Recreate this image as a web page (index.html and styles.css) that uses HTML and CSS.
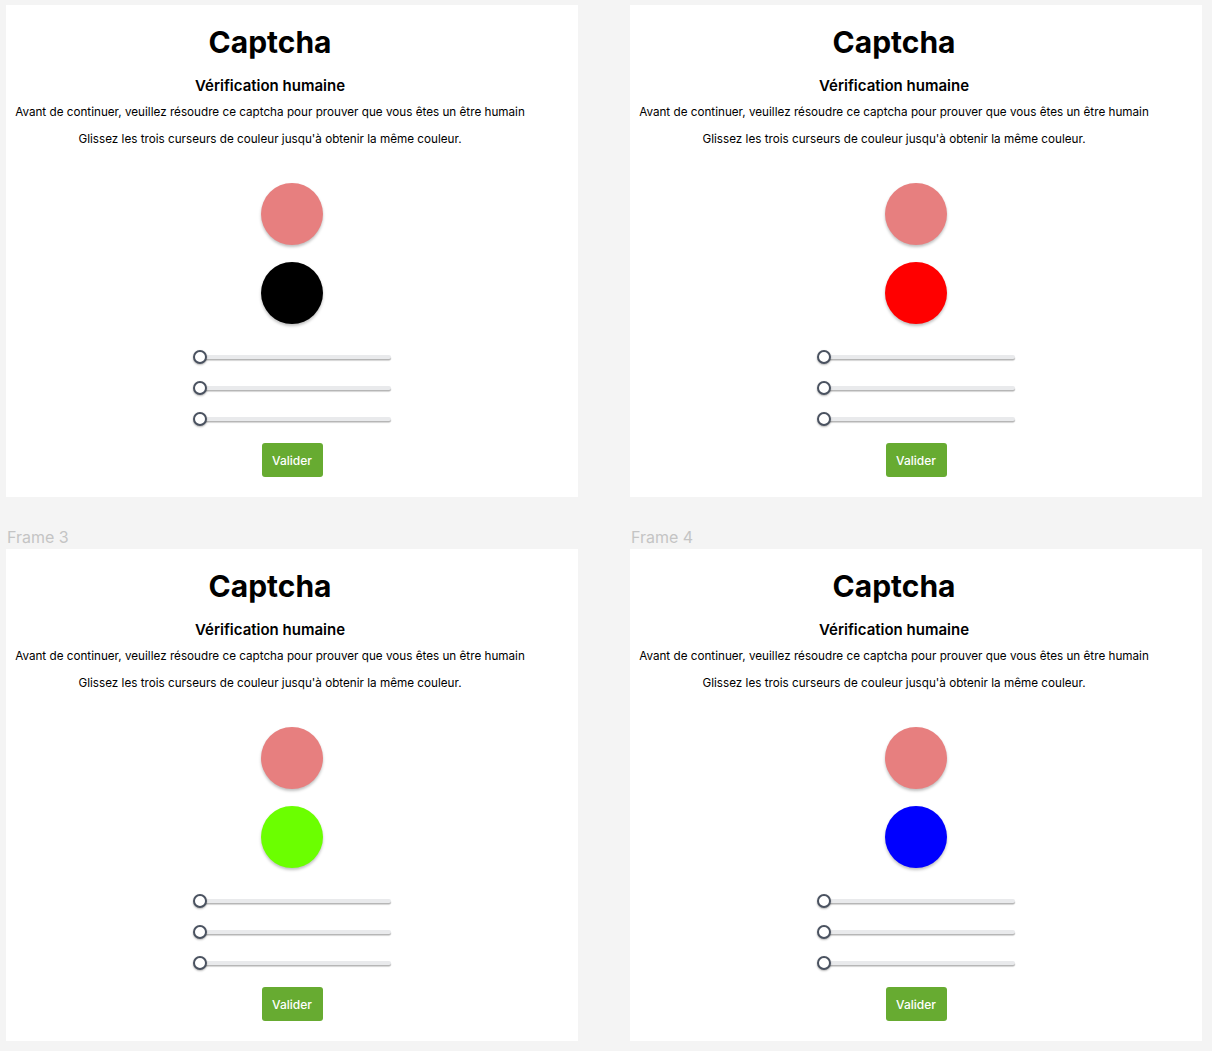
FILE: index.html
```html
<!DOCTYPE html>
<html lang="fr">
<head>
<meta charset="utf-8">
<title>Captcha</title>
<link rel="stylesheet" href="styles.css">
</head>
<body>
<div class="board">
  <div class="cell">
    <div class="frame">
      <div class="head">
        <h1 class="title">Captcha</h1>
        <h2 class="subtitle">Vérification humaine</h2>
        <p class="text">Avant de continuer, veuillez résoudre ce captcha pour prouver que vous êtes un être humain</p>
        <p class="text text-2">Glissez les trois curseurs de couleur jusqu'à obtenir la même couleur.</p>
      </div>
      <div class="body">
        <div class="dot dot-target"></div>
        <div class="dot dot-black"></div>
        <div class="sliders">
          <div class="slider"><span class="track"></span><span class="thumb"></span></div>
          <div class="slider"><span class="track"></span><span class="thumb"></span></div>
          <div class="slider"><span class="track"></span><span class="thumb"></span></div>
        </div>
        <button class="btn">Valider</button>
      </div>
    </div>
  </div>
  <div class="cell">
    <div class="frame">
      <div class="head">
        <h1 class="title">Captcha</h1>
        <h2 class="subtitle">Vérification humaine</h2>
        <p class="text">Avant de continuer, veuillez résoudre ce captcha pour prouver que vous êtes un être humain</p>
        <p class="text text-2">Glissez les trois curseurs de couleur jusqu'à obtenir la même couleur.</p>
      </div>
      <div class="body">
        <div class="dot dot-target"></div>
        <div class="dot dot-red"></div>
        <div class="sliders">
          <div class="slider"><span class="track"></span><span class="thumb"></span></div>
          <div class="slider"><span class="track"></span><span class="thumb"></span></div>
          <div class="slider"><span class="track"></span><span class="thumb"></span></div>
        </div>
        <button class="btn">Valider</button>
      </div>
    </div>
  </div>
  <div class="cell">
    <div class="label">Frame 3</div>
    <div class="frame">
      <div class="head">
        <h1 class="title">Captcha</h1>
        <h2 class="subtitle">Vérification humaine</h2>
        <p class="text">Avant de continuer, veuillez résoudre ce captcha pour prouver que vous êtes un être humain</p>
        <p class="text text-2">Glissez les trois curseurs de couleur jusqu'à obtenir la même couleur.</p>
      </div>
      <div class="body">
        <div class="dot dot-target"></div>
        <div class="dot dot-green"></div>
        <div class="sliders">
          <div class="slider"><span class="track"></span><span class="thumb"></span></div>
          <div class="slider"><span class="track"></span><span class="thumb"></span></div>
          <div class="slider"><span class="track"></span><span class="thumb"></span></div>
        </div>
        <button class="btn">Valider</button>
      </div>
    </div>
  </div>
  <div class="cell">
    <div class="label">Frame 4</div>
    <div class="frame">
      <div class="head">
        <h1 class="title">Captcha</h1>
        <h2 class="subtitle">Vérification humaine</h2>
        <p class="text">Avant de continuer, veuillez résoudre ce captcha pour prouver que vous êtes un être humain</p>
        <p class="text text-2">Glissez les trois curseurs de couleur jusqu'à obtenir la même couleur.</p>
      </div>
      <div class="body">
        <div class="dot dot-target"></div>
        <div class="dot dot-blue"></div>
        <div class="sliders">
          <div class="slider"><span class="track"></span><span class="thumb"></span></div>
          <div class="slider"><span class="track"></span><span class="thumb"></span></div>
          <div class="slider"><span class="track"></span><span class="thumb"></span></div>
        </div>
        <button class="btn">Valider</button>
      </div>
    </div>
  </div>
</div>
</body>
</html>
```
FILE: styles.css
```css
html, body {
  margin: 0;
  padding: 0;
  background: #f4f4f4;
  font-family: Inter, "Noto Sans", sans-serif;
  color: #000;
}

.board {
  display: grid;
  grid-template-columns: 572px 572px;
  column-gap: 52px;
  row-gap: 30px;
  padding-left: 6px;
  padding-top: 5px;
}

.cell {
  display: flex;
  flex-direction: column;
}

.label {
  height: 22px;
  line-height: 20px;
  font-size: 16px;
  color: #c4c4c4;
  padding-left: 1px;
}

.frame {
  background: #fff;
  height: 492px;
  box-sizing: border-box;
  padding-top: 19px;
  display: flex;
  flex-direction: column;
}

.head {
  width: 528px;
  text-align: center;
}

.title {
  margin: 0;
  font-size: 30px;
  line-height: 36px;
  font-weight: 700;
}

.subtitle {
  margin: 16px 0 0;
  font-size: 15px;
  line-height: 20px;
  font-weight: 600;
}

.text {
  margin: 8px 0 0;
  font-size: 11.7px;
  line-height: 16px;
  font-weight: 400;
}

.text-2 {
  margin-top: 11px;
}

.body {
  display: flex;
  flex-direction: column;
  align-items: center;
  margin-top: 36px;
}

.dot {
  width: 62px;
  height: 62px;
  border-radius: 50%;
  box-shadow: 0 2px 3px rgba(0, 0, 0, 0.25);
}

.dot + .dot {
  margin-top: 17px;
}

.dot-target { background: #e77f7f; }
.dot-black { background: #000; }
.dot-red { background: #ff0000; }
.dot-green { background: #6bff00; }
.dot-blue { background: #0000ff; }

.sliders {
  margin-top: 26px;
  display: flex;
  flex-direction: column;
  gap: 17px;
}

.slider {
  position: relative;
  width: 198px;
  height: 14px;
}

.track {
  position: absolute;
  left: 7px;
  right: 0;
  top: 5px;
  height: 4px;
  border-radius: 2px;
  background: #e9eaec;
  box-shadow: 0 1.5px 1px rgba(0, 0, 0, 0.3);
}

.thumb {
  position: absolute;
  left: 0;
  top: 0;
  width: 14px;
  height: 14px;
  box-sizing: border-box;
  border-radius: 50%;
  border: 2px solid #4a5260;
  background: #fff;
  box-shadow: 0 1px 2px rgba(0, 0, 0, 0.3);
}

.btn {
  margin-top: 17px;
  width: 61px;
  height: 34px;
  border: none;
  border-radius: 3px;
  background: #67ab31;
  color: #fff;
  font-family: Inter, "Noto Sans", sans-serif;
  font-size: 12px;
  font-weight: 500;
  padding: 0;
}
```
